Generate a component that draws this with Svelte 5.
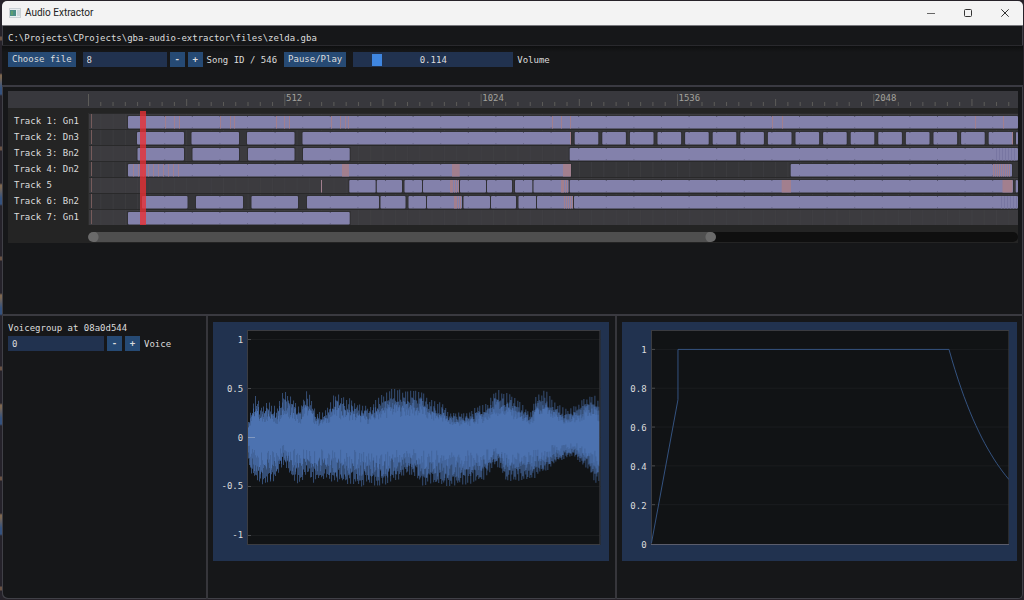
<script>
  let song = $state(8);
  let voice = $state(0);
  let volume = $state(0.114);

  const rulerTicks = Array.from({ length: 76 }, (_, i) => ({
    x: 0.5 + i * 12.27,
    top: i % 16 === 0 ? 3 : i % 8 === 0 ? 8 : 11
  }));
  const rulerLabels = [512, 1024, 1536, 2048].map((tick, i) => ({
    tick,
    left: ((198 + i * 196.25) / 930) * 100
  }));

  const shortClips = Array.from({ length: 16 }, (_, i) => [574.7 + i * 27.6, 598.3 + i * 27.6]);
  const range = (from, to, step) => {
    const out = [];
    for (let v = from; v < to; v += step) out.push(v);
    return out;
  };

  // clips: [start, end]; bends: wide pitch-bend areas; marks: single events
  const tracks = [
    {
      name: 'Track 1: Gn1',
      clips: [[128, 1018]],
      bends: [],
      marks: [165, 174, 179, 220, 230, 234, 276, 284, 289, 331, 340, 345, 348, 552, 561, 570, 772, 782, 975, 1003]
    },
    {
      name: 'Track 2: Dn3',
      clips: [[137, 184], [191.5, 239], [247, 294.5], [302.5, 571], ...shortClips, [1016, 1018]],
      bends: [],
      marks: [570, 1012]
    },
    {
      name: 'Track 3: Bn2',
      clips: [[137.5, 184], [192.5, 239], [248, 294.5], [303, 349.7], [569.7, 1018]],
      bends: [],
      marks: [],
      dark: range(996, 1015, 3)
    },
    {
      name: 'Track 4: Dn2',
      clips: [[128, 571], [790.7, 1012]],
      bends: [[342, 349], [452, 459.7], [563, 571]],
      marks: [...range(133, 182, 5), ...range(993, 1011, 2)]
    },
    {
      name: 'Track 5',
      clips: [
        [349.3, 375.8], [376.8, 402], [404.5, 422], [423, 458], [460, 486], [487, 512],
        [515, 532.7], [533.5, 569], [569.7, 1013], [1015.7, 1018]
      ],
      bends: [[450, 453], [561, 564], [781.7, 791], [1002.5, 1012.5]],
      marks: [321, 454, 456, 458, 565, 567]
    },
    {
      name: 'Track 6: Bn2',
      clips: [
        [142, 187.5], [196, 243], [251.5, 298], [307, 379], [380.5, 405.5], [408.5, 426], [427, 462],
        [463.5, 490], [491, 516], [518.5, 536.5], [537, 573], [574, 1018]
      ],
      bends: [[454, 457]],
      marks: [458, 460, 564, 566, 568, 570, 572],
      dark: range(1001, 1017, 3)
    },
    { name: 'Track 7: Gn1', clips: [[128, 349.7]], bends: [], marks: [] }
  ];
  const notches = range(164.7, 1018, 27.6);
  const gridLines = range(12.8, 930, 12.27);

  const upper = [
    [0, 14], [9, 44], [14, 31], [22, 38], [30, 29], [35, 47], [44, 44], [50, 36], [53, 30], [58, 46], [62, 49],
    [66, 34], [70, 26], [78, 28], [84, 38], [88, 45], [98, 42], [110, 36], [122, 31], [132, 42], [145, 49],
    [165, 48], [176, 48], [180, 40], [190, 37], [197, 36], [201, 26], [222, 26], [232, 33], [240, 35], [248, 48],
    [262, 46], [270, 40], [276, 34], [283, 25], [289, 44], [298, 48], [310, 34], [320, 28], [330, 34], [338, 40],
    [346, 45], [353, 36]
  ];
  const lower = [
    [0, 18], [4, 37], [10, 45], [15, 48], [25, 48], [31, 36], [37, 27], [46, 43], [54, 49], [61, 37], [66, 48],
    [72, 44], [82, 44], [95, 46], [110, 49], [135, 49], [148, 44], [160, 38], [168, 39], [175, 48], [190, 49],
    [215, 49], [228, 46], [238, 43], [243, 34], [248, 27], [254, 34], [260, 45], [274, 46], [284, 43], [292, 38],
    [300, 34], [306, 27], [316, 22], [326, 18], [334, 26], [342, 34], [348, 49], [353, 42]
  ];
  function sample(points, x) {
    for (let i = 1; i < points.length; i++) {
      const [x0, y0] = points[i - 1];
      const [x1, y1] = points[i];
      if (x <= x1) return y0 + ((y1 - y0) * (x - x0)) / (x1 - x0);
    }
    return points[points.length - 1][1];
  }
  const noise = (n) => {
    const v = Math.sin(n * 12.9898) * 43758.5453;
    return v - Math.floor(v);
  };
  let outerPath = '';
  let midPath = '';
  let corePath = '';
  for (let i = 0; i < 352; i++) {
    const x = i + 0.5;
    const u = sample(upper, x);
    const d = sample(lower, x);
    const long = (i * 3) % 8 < 3 ? 0.9 + 0.1 * noise(i + 3) : 0.62 + 0.22 * noise(i);
    const longDown = (i * 3 + 4) % 8 < 3 ? 0.9 + 0.1 * noise(i + 5) : 0.66 + 0.24 * noise(i + 400);
    outerPath += `M${x} ${(107.5 - u * long).toFixed(1)}V${(107.5 + d * longDown).toFixed(1)}`;
    midPath += `M${x} ${(107.5 - u * (0.5 + 0.34 * noise(i + 90))).toFixed(1)}V${(107.5 + d * (0.46 + 0.42 * noise(i + 7))).toFixed(1)}`;
    corePath += `M${x} ${(107.5 - u * (0.42 + 0.26 * noise(i + 31))).toFixed(1)}V${(107.5 + d * (0.26 + 0.4 * noise(i + 77))).toFixed(1)}`;
  }

  const release = range(0, 61, 3)
    .map((t) => `L${298.5 + t} ${(215 - 195.5 * Math.exp(-0.0184 * t)).toFixed(1)}`)
    .join('');

  const waveTicks = [9.5, 58.5, 107.5, 156.5, 205.5];
  const envTicks = [19.5, 58.5, 97.5, 136.5, 175.5];
</script>

<div class="desktop">
  <main class="window">
    <header class="titlebar">
      <svg class="appicon" viewBox="0 0 12 10" aria-hidden="true">
        <rect x="0.5" y="0.5" width="11" height="9" fill="#e9eef0" stroke="#a9b4ba" stroke-dasharray="1 1" />
        <rect x="1" y="2" width="6" height="6" fill="#4c8f86" />
        <rect x="2" y="3" width="2" height="4" fill="#5f9f72" />
        <rect x="8" y="2" width="3" height="6" fill="#ccd6da" />
      </svg>
      <h1>Audio Extractor</h1>
      <div class="winbuttons">
        <button aria-label="Minimize"><svg viewBox="0 0 8 8"><path d="M0 4.5H8" stroke="#666" /></svg></button>
        <button aria-label="Maximize"><svg viewBox="0 0 8 8"><rect x="0.5" y="0.5" width="7" height="7" rx="1" fill="none" stroke="#333" /></svg></button>
        <button aria-label="Close"><svg viewBox="0 0 8 8"><path d="M0.3 0.3L7.7 7.7M7.7 0.3L0.3 7.7" stroke="#333" /></svg></button>
      </div>
    </header>

    <p class="path">C:\Projects\CProjects\gba-audio-extractor\files\zelda.gba</p>

    <section class="controls">
      <button class="btn">Choose file</button>
      <div class="stepper">
        <input id="song" class="field" type="text" bind:value={song} />
        <button class="btn step" aria-label="Previous song" onclick={() => song--}>-</button>
        <button class="btn step" aria-label="Next song" onclick={() => song++}>+</button>
        <label for="song">Song ID / 546</label>
      </div>
      <button class="btn">Pause/Play</button>
      <div class="stepper">
        <div class="slider">
          <input id="volume" type="range" min="0" max="1" step="0.001" bind:value={volume} />
          <output for="volume">{volume.toFixed(3)}</output>
        </div>
        <label for="volume">Volume</label>
      </div>
    </section>

    <section class="sequencer">
      <div class="timeline">
        <div class="ruler">
          <div class="scale">
            <svg viewBox="0 0 930 17" preserveAspectRatio="none" aria-hidden="true">
              {#each rulerTicks as t}
                <path d="M{t.x} {t.top}V15" stroke="#5d5c59" />
              {/each}
            </svg>
            {#each rulerLabels as l}
              <span style="left: {l.left}%">{l.tick}</span>
            {/each}
          </div>
        </div>
        <div class="lanes">
          <ul>
            {#each tracks as t}<li>{t.name}</li>{/each}
          </ul>
          <svg viewBox="88 0 930 117" preserveAspectRatio="none" aria-hidden="true">
            {#each tracks as t, i}
              <g transform="translate(0 {5 + i * 16})">
                <rect x="88" y="0" width="930" height="16" fill={i % 2 ? '#353538' : '#3c3b3f'} />
                {#each gridLines as x}
                  <path d="M{88 + x} 0V16" stroke="#444448" stroke-opacity="0.5" />
                {/each}
                <rect x="91" y="1" width="1" height="14" fill="#765b5b" />
                {#each t.clips as [a, b]}
                  <rect x={a - 1} y="2" width={b - a + 2} height="14" fill="#303033" />
                  <rect x={a} y="3" width={b - a} height="12.5" rx="1" fill="#8381ab" />
                  {#each notches as n}
                    {#if n > a + 3 && n < b - 3}
                      <path d="M{n} 3v1M{n} 14.5v1" stroke="#55546e" />
                    {/if}
                  {/each}
                {/each}
                {#each t.bends as [a, b]}
                  <rect x={a} y="3" width={b - a} height="12.5" fill="#a27f8e" />
                {/each}
                {#each t.marks as m}
                  <rect x={m} y="3" width="1" height="12.5" fill="#a27f8e" />
                {/each}
                {#each t.dark ?? [] as m}
                  <rect x={m} y="3" width="1" height="12.5" fill="#7876a2" />
                {/each}
                <rect x="88" y="0" width="930" height="1" fill="#29292a" />
              </g>
            {/each}
            <rect x="88" y="5" width="1" height="112" fill="#2c2c2c" />
            <rect x="140" y="3" width="6" height="114" fill="#ea2f33" fill-opacity="0.78" />
          </svg>
        </div>
        <div class="scrollrow">
          <div class="scrollbar"><div class="thumb"></div></div>
        </div>
      </div>
    </section>

    <div class="bottom">
      <section class="voice">
        <p>Voicegroup at 08a0d544</p>
        <div class="stepper">
          <input id="voice" class="field wide" type="text" bind:value={voice} />
          <button class="btn step" aria-label="Previous voice" onclick={() => voice--}>-</button>
          <button class="btn step" aria-label="Next voice" onclick={() => voice++}>+</button>
          <label for="voice">Voice</label>
        </div>
      </section>

      <section class="pane">
        <div class="plot">
          <div class="axis wave">
            <span>1</span><span>0.5</span><span>0</span><span>-0.5</span><span>-1</span>
          </div>
          <svg viewBox="0 0 353 215" preserveAspectRatio="none" role="img" aria-label="Waveform">
            <rect width="353" height="215" fill="#111315" />
            {#each waveTicks as y}
              <path d="M0 {y}H353" stroke="#1b1d1f" />
              <path d="M0 {y}H4" stroke="#4a4b4e" />
            {/each}
            <path d={outerPath} stroke="#4c72b0" stroke-opacity="0.62" />
            <path d={midPath} stroke="#4c72b0" stroke-opacity="0.65" />
            <path d={corePath} stroke="#4c72b0" />
            <path d="M0 107.5H8" stroke="#8199c0" />
            <rect x="0.5" y="0.5" width="352" height="214" fill="none" stroke="#3b3c41" />
          </svg>
        </div>
      </section>

      <section class="pane">
        <div class="plot narrow">
          <div class="axis env">
            <span>1</span><span>0.8</span><span>0.6</span><span>0.4</span><span>0.2</span><span>0</span>
          </div>
          <svg viewBox="0 0 359 216" preserveAspectRatio="none" role="img" aria-label="Envelope">
            <rect width="359" height="216" fill="#111315" />
            {#each envTicks as y}
              <path d="M0 {y}H359" stroke="#1b1d1f" />
              <path d="M0 {y}H4" stroke="#4a4b4e" />
            {/each}
            <rect x="0.5" y="0.5" width="358" height="215" fill="none" stroke="#3b3c41" />
            <path d="M0 215.5H359" stroke="#5b5d6c" />
            <path d="M0.5 214L27 70V19.5H298.5{release}" fill="none" stroke="#34527f" />
          </svg>
        </div>
      </section>
    </div>
  </main>
</div>

<style>
  :global(body) {
    margin: 0;
    background: #262229;
  }
  .desktop {
    box-sizing: border-box;
    min-height: 100vh;
    display: flex;
    padding: 1px 1px 1px 2px;
    background:
      repeating-linear-gradient(#25222a 0 36px, #6b5345 37px 40px, #25222a 41px 73px, #7d6750 75px 77px, #35527f 88px 94px, #25222a 96px 110px) left top / 2px 100% no-repeat,
      #262229;
    color: #dcdcdc;
    font: 9px/12px "DejaVu Sans Mono", monospace;
  }
  * {
    box-sizing: border-box;
  }
  p,
  h1,
  ul {
    margin: 0;
    padding: 0;
    font: inherit;
    list-style: none;
  }
  button,
  input {
    margin: 0;
    padding: 0;
    border: 0;
    border-radius: 0;
    color: inherit;
    font: inherit;
  }
  svg {
    display: block;
  }
  .window {
    flex: 1;
    min-width: 0;
    display: flex;
    flex-direction: column;
    overflow: hidden;
    border-radius: 5px;
    background: #161719;
    box-shadow: inset 1px -1px #404047, inset -1px 0 #404047;
  }
  .titlebar {
    display: flex;
    align-items: center;
    gap: 4px;
    height: 25px;
    padding: 0 8px 0 7px;
    background: #f3f3f3;
    border-bottom: 1px solid #77777c;
  }
  .appicon {
    width: 12px;
    height: 10px;
  }
  h1 {
    color: #222;
    font: 10px/16px Roboto, sans-serif;
  }
  .winbuttons {
    display: flex;
    gap: 16px;
    margin-left: auto;
  }
  .winbuttons button {
    display: grid;
    place-items: center;
    width: 21px;
    height: 20px;
    background: none;
  }
  .winbuttons svg {
    width: 8px;
    height: 8px;
  }
  .path {
    height: 20px;
    padding: 6px 6px 0;
    border-bottom: 1px solid #29292d;
  }
  .controls {
    display: flex;
    align-items: flex-start;
    gap: 7px;
    height: 41px;
    padding: 6px 6px 0;
    border-bottom: 2px solid #3a3a42;
    background: linear-gradient(#0e0f10, #161719 6px);
    background-clip: padding-box;
  }
  .stepper {
    display: flex;
    align-items: center;
    gap: 3px;
  }
  .stepper label {
    padding-left: 1px;
  }
  .btn {
    height: 15px;
    padding: 0 4px;
    background: #264a74;
    line-height: 15px;
    white-space: nowrap;
  }
  .step {
    width: 15px;
    padding: 0;
    font-weight: bold;
  }
  .field {
    width: 84px;
    height: 15px;
    padding: 0 4px;
    background: #21324f;
  }
  .field.wide {
    width: 96px;
  }
  .slider {
    position: relative;
  }
  .slider input {
    display: block;
    width: 160px;
    height: 15px;
    padding: 0 2px;
    background: #21324f;
    appearance: none;
  }
  .slider input::-webkit-slider-thumb {
    width: 10px;
    height: 12px;
    background: #3f86e0;
    appearance: none;
  }
  .slider output {
    position: absolute;
    inset: 0;
    line-height: 16px;
    text-align: center;
    pointer-events: none;
  }
  .sequencer {
    min-height: 227px;
    padding: 4px 5px 0 6px;
  }
  .timeline {
    background: #242424;
  }
  .ruler {
    height: 17px;
    padding-left: 80px;
    background: #38383d;
  }
  .scale {
    position: relative;
  }
  .scale svg {
    width: 100%;
    height: 17px;
  }
  .scale span {
    position: absolute;
    top: 1px;
    color: #a3a29c;
  }
  .lanes {
    display: grid;
    grid-template-columns: 80px 1fr;
  }
  .lanes ul {
    padding: 5px 0 0 6px;
    line-height: 16px;
  }
  .lanes svg {
    width: 100%;
    height: 117px;
  }
  .scrollrow {
    padding: 7px 0 1px 80px;
  }
  .scrollbar {
    height: 10px;
    border-radius: 5px;
    background: #0f0f0f;
  }
  .thumb {
    width: 67.5%;
    height: 10px;
    border-radius: 5px;
    background:
      radial-gradient(circle at 5px 5px, #6a6a6a 5px, transparent 6px),
      radial-gradient(circle at calc(100% - 5px) 5px, #6a6a6a 5px, transparent 6px),
      #4f4f4f;
  }
  .bottom {
    flex: 1;
    display: grid;
    grid-template-columns: 1fr 2fr 2fr;
    border-top: 2px solid #3a3a40;
  }
  .voice {
    padding: 6px 6px;
  }
  .voice p {
    margin-bottom: 2px;
  }
  .pane {
    padding: 6px 6px 5px 5px;
    border-left: 2px solid #36363b;
  }
  .plot {
    display: grid;
    grid-template-columns: 34px 1fr;
    padding: 8px 8px 16px 0;
    background: #21324f;
  }
  .plot.narrow {
    grid-template-columns: 29px 1fr;
  }
  .plot svg {
    width: 100%;
    height: 215px;
  }
  .axis {
    display: flex;
    flex-direction: column;
    justify-content: space-between;
    padding: 4px 4px 4px 0;
    text-align: right;
  }
  .axis.env {
    padding: 14px 4px 0 0;
    margin-bottom: -6px;
  }
</style>
